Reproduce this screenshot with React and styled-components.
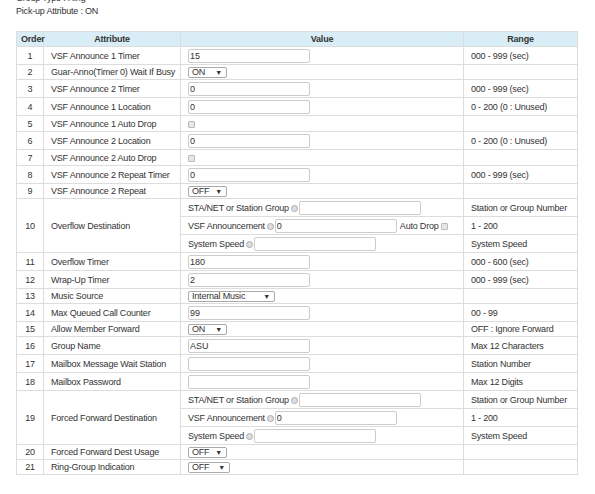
import styled, { createGlobalStyle } from "styled-components";

const GlobalStyle = createGlobalStyle`
  body {
    margin: 0;
    background: #fff;
    font-family: "Liberation Sans", Arial, sans-serif;
    color: #333;
  }
`;

const SUB_RANGE = ["Station or Group Number", "1 - 200", "System Speed"];

const rows = [
  { no: 1, name: "VSF Announce 1 Timer", kind: "input", value: "15", range: "000 - 999 (sec)" },
  { no: 2, name: "Guar-Anno(Timer 0) Wait If Busy", kind: "select", value: "ON", width: 39 },
  { no: 3, name: "VSF Announce 2 Timer", kind: "input", value: "0", range: "000 - 999 (sec)" },
  { no: 4, name: "VSF Announce 1 Location", kind: "input", value: "0", range: "0 - 200 (0 : Unused)" },
  { no: 5, name: "VSF Announce 1 Auto Drop", kind: "check" },
  { no: 6, name: "VSF Announce 2 Location", kind: "input", value: "0", range: "0 - 200 (0 : Unused)" },
  { no: 7, name: "VSF Announce 2 Auto Drop", kind: "check" },
  { no: 8, name: "VSF Announce 2 Repeat Timer", kind: "input", value: "0", range: "000 - 999 (sec)" },
  { no: 9, name: "VSF Announce 2 Repeat", kind: "select", value: "OFF", width: 39 },
  { no: 10, name: "Overflow Destination", kind: "dest", autoDrop: true },
  { no: 11, name: "Overflow Timer", kind: "input", value: "180", range: "000 - 600 (sec)" },
  { no: 12, name: "Wrap-Up Timer", kind: "input", value: "2", range: "000 - 999 (sec)" },
  { no: 13, name: "Music Source", kind: "select", value: "Internal Music", width: 87 },
  { no: 14, name: "Max Queued Call Counter", kind: "input", value: "99", range: "00 - 99" },
  { no: 15, name: "Allow Member Forward", kind: "select", value: "ON", width: 39, range: "OFF : Ignore Forward" },
  { no: 16, name: "Group Name", kind: "input", value: "ASU", range: "Max 12 Characters" },
  { no: 17, name: "Mailbox Message Wait Station", kind: "input", value: "", range: "Station Number" },
  { no: 18, name: "Mailbox Password", kind: "input", value: "", range: "Max 12 Digits" },
  { no: 19, name: "Forced Forward Destination", kind: "dest" },
  { no: 20, name: "Forced Forward Dest Usage", kind: "select", value: "OFF", width: 39 },
  { no: 21, name: "Ring-Group Indication", kind: "select", value: "OFF", width: 42 },
];

function Select({ value, width }) {
  return (
    <FakeSelect style={{ width }}>
      <span>{value}</span>
      <Arrow>▼</Arrow>
    </FakeSelect>
  );
}

function ValueCell({ row }) {
  if (row.kind === "input") return <TextBox defaultValue={row.value} />;
  if (row.kind === "select") return <Select value={row.value} width={row.width} />;
  return <Check $block />;
}

function DestRows({ row }) {
  return (
    <>
      <tr>
        <Cell rowSpan={3} $center>{row.no}</Cell>
        <Cell rowSpan={3}>{row.name}</Cell>
        <Cell>
          <Inline>
            STA/NET or Station Group<Radio />
            <TextBox defaultValue="" />
          </Inline>
        </Cell>
        <Cell>{SUB_RANGE[0]}</Cell>
      </tr>
      <tr>
        <Cell>
          <Inline>
            VSF Announcement<Radio />
            <TextBox defaultValue="0" />
            {row.autoDrop && (
              <>
                <Label>Auto Drop</Label>
                <Check />
              </>
            )}
          </Inline>
        </Cell>
        <Cell>{SUB_RANGE[1]}</Cell>
      </tr>
      <tr>
        <Cell>
          <Inline>
            System Speed<Radio />
            <TextBox defaultValue="" />
          </Inline>
        </Cell>
        <Cell>{SUB_RANGE[2]}</Cell>
      </tr>
    </>
  );
}

export default function App() {
  return (
    <Page>
      <GlobalStyle />
      <Info>
        <div>Group Type : Ring</div>
        <div>Pick-up Attribute : ON</div>
      </Info>
      <Table>
        <colgroup>
          <col style={{ width: 27 }} />
          <col style={{ width: 137 }} />
          <col style={{ width: 283 }} />
          <col style={{ width: 114 }} />
        </colgroup>
        <thead>
          <tr>
            <Head>Order</Head>
            <Head>Attribute</Head>
            <Head>Value</Head>
            <Head>Range</Head>
          </tr>
        </thead>
        <tbody>
          {rows.map((row) =>
            row.kind === "dest" ? (
              <DestRows key={row.no} row={row} />
            ) : (
              <tr key={row.no}>
                <Cell $center>{row.no}</Cell>
                <Cell>{row.name}</Cell>
                <Cell>
                  <ValueCell row={row} />
                </Cell>
                <Cell>{row.range}</Cell>
              </tr>
            )
          )}
        </tbody>
      </Table>
    </Page>
  );
}

const Page = styled.div`
  padding: 0 16px;
  margin-top: -8px;
  font-size: 9px;
  letter-spacing: -0.2px;
`;

const Info = styled.div`
  line-height: 13px;
  margin-bottom: 13px;
`;

const Table = styled.table`
  width: 561px;
  border-collapse: collapse;
  table-layout: fixed;
`;

const Head = styled.th`
  background: #d9edf7;
  border: 1px solid #ddd;
  font-weight: bold;
  line-height: 12px;
  padding: 1px 4px 1px;
  text-align: center;
  color: #333;
`;

const Cell = styled.td`
  border: 1px solid #ddd;
  line-height: 11px;
  padding: 2px 7px 1px;
  text-align: ${(p) => (p.$center ? "center" : "left")};
  vertical-align: middle;
  white-space: nowrap;
`;

const TextBox = styled.input`
  box-sizing: border-box;
  display: block;
  width: 122px;
  height: 14px;
  border: 1px solid #ccc;
  border-radius: 2px;
  padding: 0 1px;
  margin: 0;
  font: inherit;
  color: #333;
  background: #fff;
`;

const FakeSelect = styled.div`
  box-sizing: border-box;
  display: flex;
  align-items: center;
  justify-content: space-between;
  height: 11px;
  border: 1px solid #aaa;
  border-radius: 2px;
  padding: 0 4px 0 3px;
  line-height: 9px;
`;

const Arrow = styled.span`
  font-size: 7px;
  color: #333;
`;

const Check = styled.span`
  display: ${(p) => (p.$block ? "block" : "inline-block")};
  box-sizing: border-box;
  width: 7px;
  height: 7px;
  margin: ${(p) => (p.$block ? "2.5px 0" : "0")};
  border: 1px solid #bbb;
  border-radius: 1px;
  background: #e6e6e6;
`;

const Radio = styled.span`
  display: inline-block;
  box-sizing: border-box;
  width: 7px;
  height: 7px;
  margin: 0 1px 0 2px;
  border: 1px solid #aaa;
  border-radius: 50%;
  background: #ddd;
`;

const Label = styled.span`
  margin: 0 2px 0 3px;
`;

const Inline = styled.div`
  display: flex;
  align-items: center;
`;
